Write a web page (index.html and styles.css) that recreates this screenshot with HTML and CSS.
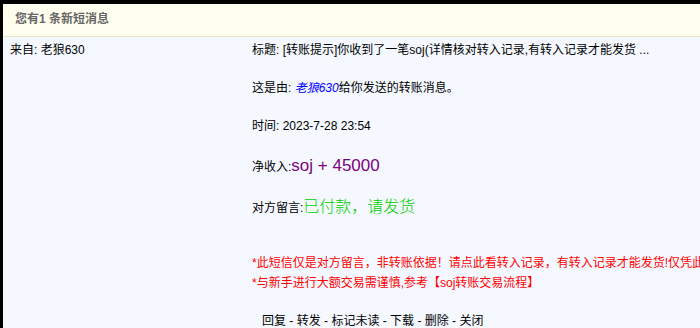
FILE: index.html
```html
<!DOCTYPE html>
<html lang="zh-CN">
<head>
    <meta charset="UTF-8">
    <title>短消息</title>
    <link rel="stylesheet" href="styles.css">
</head>
<body>
    <div class="frame">
        <div class="msg-head">您有1 条新短消息</div>
        <div class="msg-row">
            <div class="msg-from">来自: 老狼630</div>
            <div class="msg-body">
                <p class="line">标题: [转账提示]你收到了一笔soj(详情核对转入记录,有转入记录才能发货 ...</p>
                <p class="line">这是由: <a class="user" href="#">老狼630</a>给你发送的转账消息。</p>
                <p class="line">时间: 2023-7-28 23:54</p>
                <p class="line big">净收入:<span class="amount">soj + 45000</span></p>
                <p class="line big">对方留言:<span class="note">已付款，请发货</span></p>
                <div class="warn">
                    <p>*此短信仅是对方留言，非转账依据！请点此看转入记录，有转入记录才能发货!仅凭此</p>
                    <p>*与新手进行大额交易需谨慎,参考【soj转账交易流程】</p>
                </div>
                <div class="actions">
                    <a href="#">回复</a> - <a href="#">转发</a> - <a href="#">标记未读</a> - <a href="#">下载</a> - <a href="#">删除</a> - <a href="#">关闭</a>
                </div>
            </div>
        </div>
    </div>
</body>
</html>
```

FILE: styles.css
```css
body {
    margin: 0;
    background-color: #000;
    font-family: "Liberation Sans", Arial, "Noto Sans CJK SC", sans-serif;
    font-size: 12px;
    color: #000;
    overflow: hidden;
}
.frame {
    margin: 4px 0 0 3px;
    height: 324px;
    background-color: #f5f9ff;
    overflow: hidden;
}
.msg-head {
    background-color: #fffff0;
    border-bottom: 1px solid #ede8c4;
    color: #666;
    font-weight: bold;
    padding: 8px 12px 9px;
    line-height: 15px;
}
.msg-row {
    display: flex;
}
.msg-from {
    width: 235px;
    padding: 5px 7px;
    line-height: 16px;
    flex-shrink: 0;
}
.msg-body {
    padding: 5px 0;
    white-space: nowrap;
}
.line {
    margin: 0 0 22px;
    line-height: 16px;
}
.line.big {
    line-height: 20px;
    margin-bottom: 20px;
}
.user {
    color: #00f;
    font-style: italic;
    text-decoration: none;
}
.amount {
    color: #800080;
    font-size: 17px;
}
.note {
    color: #00cc00;
    font-size: 16px;
    font-weight: 300;
}
.warn {
    margin-top: 35px;
    color: #f00;
}
.warn p {
    margin: 0;
    line-height: 20px;
}
.actions {
    margin-top: 20px;
    padding-left: 10px;
    line-height: 16px;
}
.actions a {
    color: #000;
    text-decoration: none;
}
```
